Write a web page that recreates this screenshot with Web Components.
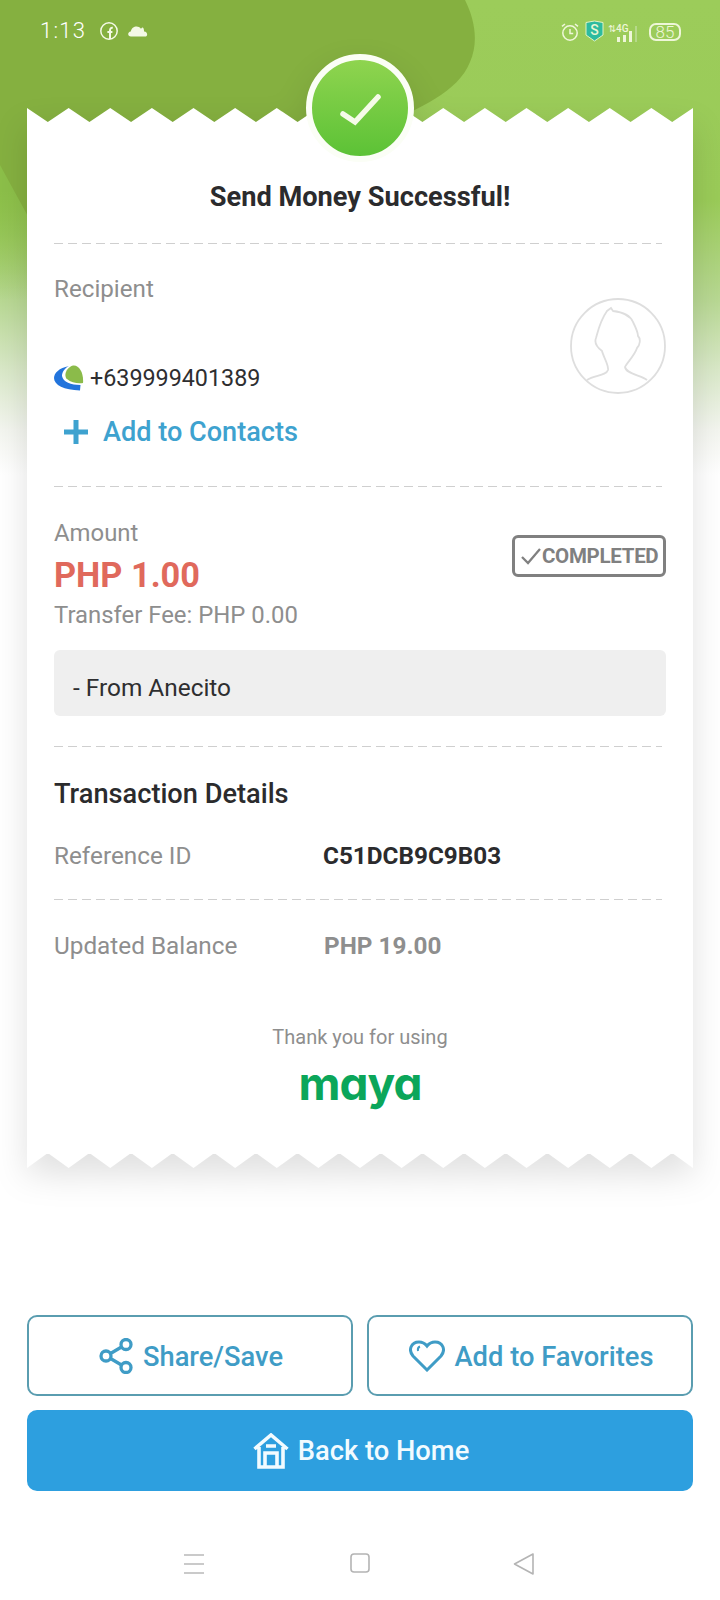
<!DOCTYPE html>
<html lang="en"><head><meta charset="utf-8"><title>Send Money Successful</title>
<style>
html,body{margin:0;padding:0;background:#fff}
body{font-family:Roboto,"Liberation Sans",sans-serif;width:720px;height:1600px;overflow:hidden}
</style></head><body>
<pay-screen>
  <status-bar slot="top"></status-bar>
  <receipt-card slot="top">
    <receipt-section kind="title"><span>Send Money Successful!</span></receipt-section>
    <recipient-block number="+639999401389"></recipient-block>
    <amount-block amount="PHP 1.00" fee="Transfer Fee: PHP 0.00" note="- From Anecito"></amount-block>
    <details-block></details-block>
  </receipt-card>
  <action-bar slot="bottom"></action-bar>
  <nav-bar slot="bottom"></nav-bar>
</pay-screen>
<script>
function def(name, html){
  customElements.define(name, class extends HTMLElement{
    connectedCallback(){
      if(this.shadowRoot) return;
      const r=this.attachShadow({mode:'open'});
      r.innerHTML=typeof html==='function'?html(this):html;
    }
  });
}
def('pay-screen',`<style>
:host{display:flex;flex-direction:column;position:relative;width:720px;height:1600px;overflow:hidden;background:#fff}
.bg{position:absolute;left:0;top:0;width:720px;height:500px;z-index:0}
.top,.bottom{position:relative;z-index:1;display:block}
.top{flex:1}
</style>
<svg class="bg" viewBox="0 0 720 500" aria-hidden="true">
<defs><linearGradient id="f" x1="0" y1="0" x2="0" y2="1">
<stop offset="0" stop-color="#9ccc5a"/><stop offset=".4" stop-color="#9acb58"/><stop offset=".6" stop-color="#b8d893"/><stop offset=".74" stop-color="#d9e8c8"/><stop offset=".86" stop-color="#f3f5ef"/><stop offset=".95" stop-color="#fff"/></linearGradient>
<linearGradient id="l" gradientUnits="userSpaceOnUse" x1="0" y1="190" x2="0" y2="300"><stop offset="0" stop-color="#8cbf49"/><stop offset="1" stop-color="#8cbf49" stop-opacity="0"/></linearGradient>
</defs>
<rect width="720" height="500" fill="url(#f)"/>
<path d="M0 150H30V300H0Z" fill="url(#l)"/>
<path d="M0 0H465C476 22 478 44 470 62C458 92 420 108 380 126L30 220 0 165Z" fill="#85b040"/>
</svg>
<div class="top"><slot name="top"></slot></div>
<div class="bottom"><slot name="bottom"></slot></div>`);

def('status-bar',`<style>
:host{display:flex;align-items:center;justify-content:space-between;height:62px;padding:0 39px 0 40px;margin-bottom:46px;color:#fff;box-sizing:border-box}
.l,.r{display:flex;align-items:center}
.t{font-size:22px;font-weight:300;letter-spacing:1.2px;line-height:26px;width:59px}
.bat{width:32px;height:18px;border:2px solid #eef6d8;border-radius:7px;box-sizing:border-box;font-size:17px;font-weight:300;line-height:14px;text-align:center;margin-left:11px;color:#eef6d8}
.r{padding-top:2px}
svg{display:block}
</style>
<div class="l"><span class="t">1:13</span>
<svg width="20" height="20" viewBox="0 0 20 20" fill="none" stroke="#f4f9e6"><circle cx="10" cy="10" r="8.2" stroke-width="1.5"/><path d="M11 18V9.6C11 7.6 11.8 6.6 13.8 6.8M8.4 11H13.4" stroke-width="2"/></svg>
<svg style="margin-left:9px" width="20" height="12" viewBox="0 0 20 12" fill="#f4f9e6"><path d="M3 11.5C-.6 11.5-.8 6.800 2.800 6.400 3.500 1.600 10-.6 13 3.800 16-.2 16 6.600 16.200 6.600 20 7 20 11.500 17 11.500Z"/></svg></div>
<div class="r">
<svg width="20" height="20" viewBox="0 0 20 20" fill="none" stroke="#f0f7da" stroke-width="1.5"><circle cx="10" cy="11" r="7.200"/><path d="M10 7V11.400H13.200M2 4.400L5 2M18 4.400L15 2"/></svg>
<svg style="margin-left:5px;margin-top:-3px" width="19" height="22" viewBox="0 0 19 22"><path d="M1 2.500 9.500 1 18 2.500V15L9.500 21 1 15Z" fill="#2dbb9f" stroke="#dff3c4" stroke-width="1"/><text x="9.500" y="15" text-anchor="middle" font-size="14" font-weight="500" font-family="Roboto" fill="#e7f6d2">S</text></svg>
<svg style="margin-left:4px" width="30" height="20" viewBox="0 0 30 20"><text x="0" y="10" font-size="10" font-weight="500" font-family="Roboto" fill="#eef6d8">⇅4G</text><path d="M9 15h3v5H9zM15 13h3v7h-3zM21 9h3v11h-3z" fill="#eef6d8"/><path d="M27 4h2v16h-2z" fill="#b6d98a"/></svg>
<span class="bat">85</span></div>`);

def('receipt-card',`<style>
:host{display:block;width:666px;margin-left:27px;position:relative;filter:drop-shadow(0 14px 16px rgba(0,0,0,.12))}
svg.z{display:block;width:666px}
.body{background:#fff;padding:60px 27px 0;margin:-1px 0;position:relative}
.badge{position:absolute;left:279px;top:-68px;width:108px;height:108px;box-sizing:border-box;border-radius:50%;border:6px solid #fbfef6;background:linear-gradient(#8fd44f,#5cc236);z-index:2}
.badge svg{position:absolute;left:20px;top:24px}
</style>
<svg class="z" height="15" viewBox="0 0 666 15" preserveAspectRatio="none"><polygon fill="#fff" points="${Array.from({length:17},(_,i)=>(i*41.625).toFixed(2)+',0'+(i<16?' '+((i+.5)*41.625).toFixed(2)+',14':'')).join(' ')} 666,15 0,15"/></svg>
<div class="body"><div class="badge"><svg width="52" height="46" viewBox="0 0 52 46" fill="none" stroke="#f5fbe8" stroke-width="5.500" stroke-linecap="round"><path d="M11 30 23 38 46 13"/></svg></div><slot></slot></div>
<svg class="z" height="16" viewBox="0 0 666 16" preserveAspectRatio="none"><polygon fill="#fff" points="0,0 666,0 ${Array.from({length:17},(_,i)=>{const x=666-i*41.625;return x.toFixed(2)+',15'+(i<16?' '+(x-20.81).toFixed(2)+',0':'')}).join(' ')}"/></svg>`);

def('receipt-section',`<style>
:host{display:block;text-align:center;font-size:27.2px;line-height:30px;font-weight:700;color:#2b2b2d;padding-bottom:31px}
</style><slot></slot>`);

def('dash-line',`<style>
:host{display:block;height:1px;width:608px;background:repeating-linear-gradient(90deg,#cfcfcf 0 9px,transparent 9px 14px)}
</style>`);

def('recipient-block',h=>`<style>
:host{display:block}
.row{display:flex;justify-content:space-between;padding:33px 0 39px}
.lab{font-size:24.2px;line-height:24px;color:#8e8e8e}
.ph{display:flex;align-items:center;gap:6px;margin-top:64px;font-size:23.3px;line-height:24px;color:#2e2e30}
.add{display:flex;align-items:center;gap:15px;margin-top:26px;padding-left:10px;font-size:27.1px;line-height:30px;font-weight:500;color:#3ea2cf}
.av{margin-top:21px;display:block}
svg{display:block}
</style>
<dash-line></dash-line>
<div class="row"><div>
<div class="lab">Recipient</div>
<div class="ph"><svg width="30" height="26" viewBox="0 0 30 26"><path d="M15 1C5 3 0 8 0 13 0 20 10 25 26 25.500L26.500 20C17 20 9 17 8 11 8 7 11 3 15 1Z" fill="#2274dc"/><path d="M29 18C25 19 17 18 13 14 9 10 13 2 19 .5 25-.5 30 8 29 18Z" fill="#8bbb4a"/></svg><span>${h.getAttribute('number')}</span></div>
<div class="add"><svg width="24" height="24" viewBox="0 0 24 24" stroke="#3ea2cf" stroke-width="5"><path d="M12 0V24M0 12H24"/></svg><span>Add to Contacts</span></div>
</div>
<svg class="av" width="96" height="96" viewBox="0 0 96 96" fill="none" stroke="#dedede" stroke-width="1.800"><circle cx="48" cy="48" r="47"/><path d="M17 82C24 77 36 78 38 72 39 67 33 58 32 53 28 50 24 45 26 40 28 33 30 23 37 13L41 10 43 13C52 14 60 17 63 24 66 30 68 34 68 38 71 41 70 47 67 50 65 57 56 66 55 69 56 76 71 77 77 82"/></svg>
</div>`);

def('amount-block',h=>`<style>
:host{display:block}
.wrap{padding:34px 0 30px}
.top{display:flex;justify-content:space-between;align-items:flex-start}
.lab{font-size:23.9px;line-height:24px;color:#8e8e8e}
.amt{font-size:34.3px;line-height:40px;font-weight:700;color:#e0695c;margin:10px 0 8px}
.st{display:flex;align-items:center;box-sizing:border-box;width:154px;height:42px;margin-top:14px;border:3px solid #808080;border-radius:6px;padding-left:6px;gap:1px;font-size:20.5px;font-weight:700;color:#808080;white-space:nowrap;letter-spacing:-.3px}
.note{margin-top:23px;height:66px;box-sizing:border-box;background:#efefef;border-radius:6px;padding:9px 19px 0;display:flex;align-items:center;font-size:24.4px;color:#2e2e30}
</style>
<dash-line></dash-line>
<div class="wrap"><div class="top"><div>
<div class="lab">Amount</div><div class="amt">${h.getAttribute('amount')}</div><div class="lab">${h.getAttribute('fee')}</div></div>
<div class="st"><svg width="20" height="18" viewBox="0 0 20 18" fill="none" stroke="#808080" stroke-width="2.300"><path d="M1 10 7 16 19 2"/></svg><span>COMPLETED</span></div></div>
<div class="note">${h.getAttribute('note')}</div></div>`);

def('detail-row',h=>`<style>
:host{display:grid;grid-template-columns:269px auto;font-size:24.3px;line-height:24px;color:#8e8e8e}
.v{font-weight:700;color:var(--v,#2b2b2d);margin-left:var(--vm,0)}
</style><span>${h.getAttribute('label')}</span><span class="v">${h.getAttribute('value')}</span>`);

def('details-block',`<style>
:host{display:block}
h2{margin:32px 0 35px;font-size:27.2px;line-height:30px;font-weight:500;color:#2b2b2d}
.d{margin:31px 0 34px}
.th{margin-top:68px;text-align:center;font-size:20px;line-height:22px;color:#8e8e8e}
.logo{height:52px;margin-top:12px;padding-bottom:42px;display:flex;justify-content:center;align-items:flex-start}
.logo span{font-family:Inter,Roboto,sans-serif;font-feature-settings:"cv11";font-weight:700;font-size:46px;line-height:46px;letter-spacing:-1px;color:#0ba65a}
</style>
<dash-line></dash-line>
<h2>Transaction Details</h2>
<detail-row label="Reference ID" value="C51DCB9C9B03"></detail-row>
<div class="d"><dash-line></dash-line></div>
<detail-row label="Updated Balance" value="PHP 19.00" style="--v:#8e8e8e;--vm:1px"></detail-row>
<div class="th">Thank you for using</div>
<div class="logo"><span>maya</span></div>`);

def('action-bar',`<style>
:host{display:grid;grid-template-columns:326px 326px;gap:14px;padding:0 27px;margin-bottom:62px}
.b{box-sizing:border-box;height:81px;border-radius:10px;padding-left:2px;display:flex;align-items:center;justify-content:center;gap:10px;font-size:27.3px;font-weight:500;border:2px solid #5a9db0;color:#3f9cc6;background:#fff}
.b span{padding-top:3px}
.m{grid-column:1/3;background:#2d9fdf;border:0;color:#f2fbff;gap:9px}
.m span{padding-top:1px}
svg{display:block}
</style>
<div class="b"><svg width="34" height="36" viewBox="0 0 34 36" fill="none" stroke="#3f9cc6" stroke-width="3.300"><circle cx="7" cy="18" r="5"/><circle cx="27" cy="6.500" r="5"/><circle cx="27" cy="29.500" r="5"/><path d="M11.500 15.500 22.500 9M11.500 20.500 22.500 27"/></svg><span>Share/Save</span></div>
<div class="b"><svg width="36" height="32" viewBox="0 0 36 32" fill="none" stroke="#3f9cc6" stroke-width="3"><path d="M18 30 4 16C-1 10 2 2 10 2 13 2 16 3.500 18 6 20 3.500 23 2 26 2 34 2 37 10 32 16Z"/><path d="M9 11C8.500 8.500 9.500 7 11 6.500" stroke-width="2"/></svg><span>Add to Favorites</span></div>
<div class="b m"><svg width="36" height="36" viewBox="0 0 36 36" fill="none" stroke="#f2fbff" stroke-width="3.600"><path d="M1.500 16 18 2 34.500 16M6 14V34H30V14"/><path d="M13 13H23M12 34V20H24V34" /></svg><span>Back to Home</span></div>`);

def('nav-bar',`<style>
:host{display:flex;height:47px;align-items:flex-start;padding-left:184px;box-sizing:border-box}
svg{display:block}
</style>
<svg width="20" height="20" viewBox="0 0 20 20" stroke="#b9b9b9" stroke-width="1.600" style="margin-top:1px"><path d="M0 1H20M0 10H20M0 19H20"/></svg>
<svg width="20" height="20" viewBox="0 0 20 20" fill="none" stroke="#b4b4b4" stroke-width="1.600" style="margin-left:146px"><rect x="1" y="1" width="18" height="18" rx="3"/></svg>
<svg width="22" height="24" viewBox="0 0 22 24" fill="none" stroke="#b4b4b4" stroke-width="1.600" stroke-linejoin="round" style="margin-left:143px;margin-top:-1px"><path d="M1.500 12 20 2V22Z"/></svg>`);
</script>
</body></html>
